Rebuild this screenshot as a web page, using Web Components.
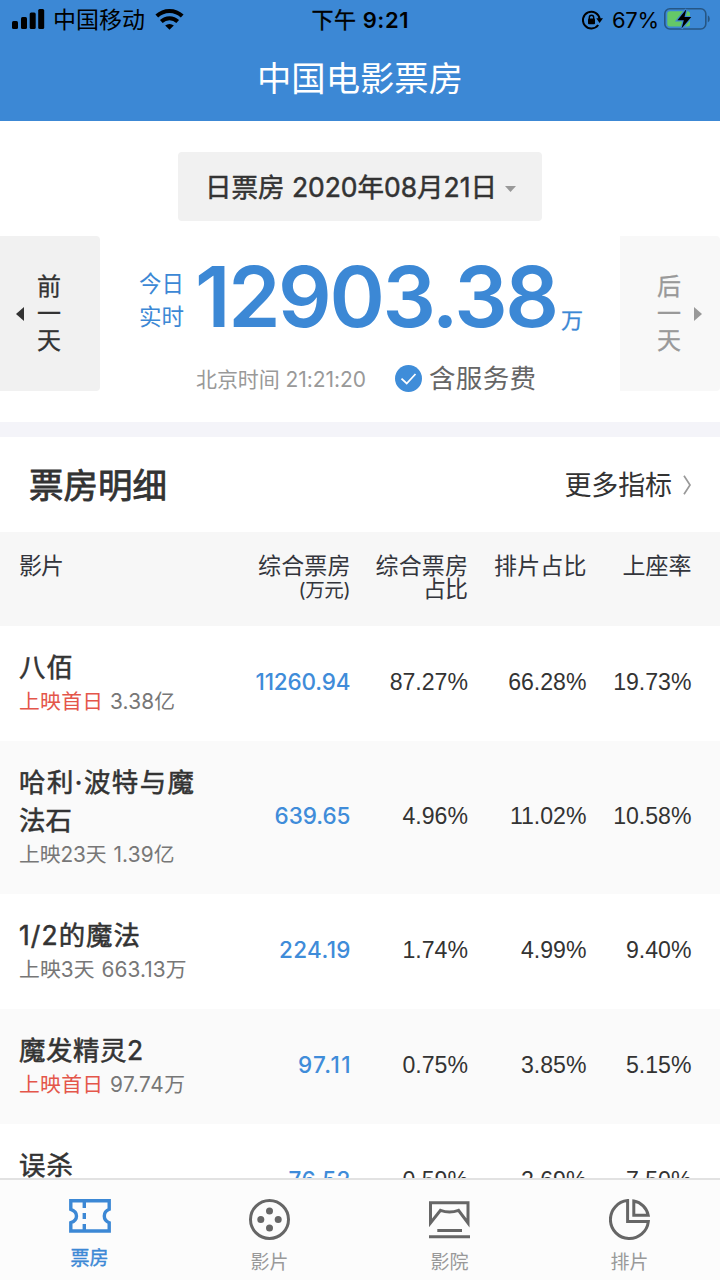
<!DOCTYPE html>
<html lang="zh-CN">
<head>
<meta charset="utf-8">
<title>中国电影票房</title>
<style>
html,body{margin:0;height:100%;overflow:hidden}
body{font-family:Inter,"Noto Sans CJK SC",sans-serif;color:#333;background:#fff}
</style>
</head>
<body>
<box-office-app></box-office-app>
<script>
const define=(name,html,setup)=>customElements.define(name,class extends HTMLElement{
  connectedCallback(){
    if(this.shadowRoot)return;
    const t=document.createElement('template');
    t.innerHTML=typeof html==='function'?html(this):html;
    this.attachShadow({mode:'open'}).append(t.content.cloneNode(true));
    if(setup)setup(this);
  }
});

/* Single line of text tracked to the advance width given in "w". */
define('tracked-text','<style>:host{display:inline-block;white-space:nowrap}</style><slot></slot>',el=>{
  const n=[...el.textContent].length,w=parseFloat(el.getAttribute('w'));
  if(!w)return;
  const s=(w-el.getBoundingClientRect().width)/(n-1);
  el.style.letterSpacing=s+'px';
  el.style.marginRight=-s+'px';
});

define('status-bar',`<style>
:host{display:grid;grid-template-columns:1fr auto 1fr;align-items:center;height:40px;color:#000;font-size:22px;line-height:40px}
.l,.r{display:flex;align-items:center;height:40px}
.l{padding-left:12px}.r{justify-content:flex-end;padding-right:10px}
svg{display:block;flex:none}
.l tracked-text{margin-left:8px;font-size:23px}
.clock{font-weight:600;font-size:22px}
.clock span{font-weight:400;-webkit-text-stroke:.35px}
</style>
<div class="l"><svg width="33" height="40" viewBox="0 0 33 40"><rect y="21" width="6" height="8" rx="1.5"/><rect x="9" y="17" width="6" height="12" rx="1.5"/><rect x="17.7" y="12.5" width="6" height="16.5" rx="1.5"/><rect x="26.2" y="9" width="6" height="20" rx="1.5"/></svg>
<tracked-text w="92">中国移动</tracked-text>
<svg style="margin-left:10px" width="29" height="40" viewBox="0 0 29 40"><path d="M14.5 29.8 L10.2 25.6 A6.3 6.3 0 0 1 18.8 25.6Z"/><g fill="none" stroke="#000" stroke-width="4"><path d="M1.8 16 A18.5 18.5 0 0 1 27.2 16"/><path d="M6.3 21.5 A12 12 0 0 1 22.7 21.5"/></g></svg></div>
<tracked-text class="clock" w="97"><span>下午</span> 9:21</tracked-text>
<div class="r"><svg width="21" height="40" viewBox="0 0 21 40"><path d="M16.2 25 A8.4 8.4 0 1 1 17.7 19" fill="none" stroke="#000" stroke-width="2"/><path d="M14.3 18.2H21L17.6 23Z"/><rect x="6" y="18.5" width="7" height="5.7" rx="1"/><path d="M7.3 19v-1.6a2.2 2.2 0 0 1 4.4 0V19" fill="none" stroke="#000" stroke-width="1.4"/></svg>
<tracked-text style="margin-left:9px" w="47">67%</tracked-text>
<svg style="margin-left:5px" width="46" height="40" viewBox="0 0 46 40"><rect x=".8" y="8.8" width="41" height="20.2" rx="5" fill="none" stroke="#265684" stroke-width="1.6"/><path d="M43.8 15.2q2 1 2 3.7t-2 3.7Z" fill="#265684"/><rect x="3.3" y="11.3" width="22.7" height="15.2" rx="2.5" fill="#65c867"/><path d="M22.3 9.3 13.4 20.2h6.4l-2.3 8.2L27.3 17.1h-6.8Z" stroke="#3d88d5" stroke-width="2.4" paint-order="stroke"/></svg></div>`);

define('title-bar',`<style>:host{display:flex;justify-content:center;height:81px;line-height:77px;font-size:34.3px;color:#fff}</style><tracked-text w="206">中国电影票房</tracked-text>`);

define('date-picker',`<style>
:host{display:flex;align-items:center;box-sizing:border-box;width:364px;height:69px;margin:31px auto 15px;padding-left:27px;border-radius:4px;background:#f1f1f1;font-size:26.5px;line-height:70px;-webkit-text-stroke:.5px #333}
svg{margin:4px 0 0 8px}
</style><tracked-text w="292">日票房 2020年08月21日</tracked-text><svg width="11" height="6" style="-webkit-text-stroke:0"><path d="M0 0H11L5.5 6Z" fill="#999"/></svg>`);

define('day-button',el=>{const next=el.hasAttribute('next');return `<style>
:host{display:flex;align-items:center;justify-content:center;box-sizing:border-box;width:100px;height:155px;background:${next?'#f8f8f8':'#f1f1f1'};color:${next?'#999':'#333'};border-radius:0 4px 4px 0;gap:13px;flex-direction:${next?'row-reverse':'row'};${next?'padding-left:19px':'padding-right:23px'}}
div{display:flex;flex-direction:column;font-size:24px;line-height:27px;-webkit-text-stroke:.3px}
</style><svg width="8" height="14"><path d="${next?'M0 0V14L8 7Z':'M8 0V14L0 7Z'}" fill="currentColor"/></svg><div>${[...el.getAttribute('label')].map(c=>`<span>${c}</span>`).join('')}</div>`});

define('daily-total',`<style>
:host{display:flex;flex-direction:column;flex:1}
.top{display:flex;height:125px;padding-left:39px;color:#3c88d5}
.tag{display:flex;flex-direction:column;width:46px;padding-top:31px;font-size:22.5px;line-height:33px}
.num{margin-left:10px;font-size:84px;font-weight:600;line-height:122px}
.unit{margin-left:2px;font-size:22px;line-height:168px;-webkit-text-stroke:.3px}
.bottom{display:flex;align-items:center;height:36px;padding-left:96px;color:#999;font-size:21px;line-height:36px}
.time{padding-top:2px}
.fee{font-size:26.5px;color:#666;margin-left:7.5px;margin-top:-2px}
svg{margin:-2px 0 0 28.5px;flex:none}
</style>
<div class="top"><div class="tag"><span>今日</span><span>实时</span></div><tracked-text class="num" w="364">12903.38</tracked-text><span class="unit">万</span></div>
<div class="bottom"><tracked-text class="time" w="170">北京时间 21:21:20</tracked-text><svg width="27" height="27"><circle cx="13.5" cy="13.5" r="13.5" fill="#3f8dd9"/><path d="M6.5 13.7 11.7 18.5 20.5 9" fill="none" stroke="#fff" stroke-width="1.8"/></svg><tracked-text class="fee" w="107">含服务费</tracked-text></div>`);

define('summary-panel',`<style>:host{display:flex;height:186px;border-bottom:15px solid #f4f4f9}</style>
<day-button label="前一天"></day-button><daily-total></daily-total><day-button next label="后一天"></day-button>`);

define('section-head',`<style>
:host{display:flex;align-items:center;height:95px;padding:0 28px 0 29px;line-height:95px}
.t{font-size:34.5px;-webkit-text-stroke:.8px #333;flex:none;padding-top:2px}
.m{font-size:27px;margin-left:auto;padding-top:2px}
.m+svg{margin-left:11px}
</style><tracked-text class="t" w="138">票房明细</tracked-text><tracked-text class="m" w="107.5">更多指标</tracked-text><svg width="9" height="20"><path d="M1 .7 7 10 1 19.3" fill="none" stroke="#999" stroke-width="1.7"/></svg>`);

define('table-head',`<style>
:host{display:grid;grid-template-columns:191px 140.5px 117.5px 118.5px 105px;padding:23px 0 0 19px;box-sizing:border-box;height:94px;background:#f7f7f7;font-size:23px;line-height:23px;color:#33353c}
div{display:flex;flex-direction:column;align-items:flex-end}
div:first-of-type{align-items:flex-start}
small{font-size:19.5px;line-height:24px}
</style><div><tracked-text w="45">影片</tracked-text></div><div><tracked-text w="92.5">综合票房</tracked-text><small><tracked-text w="52">(万元)</tracked-text></small></div><div><tracked-text w="92.5">综合票房</tracked-text><tracked-text w="45">占比</tracked-text></div><div><tracked-text w="92.5">排片占比</tracked-text></div><div><tracked-text w="69">上座率</tracked-text></div>`);

define('movie-row',el=>{
  const a=k=>el.getAttribute(k)||'';
  const tt=(v,w)=>`<tracked-text w="${w}">${v}</tracked-text>`;
  const [n1,n2]=a('name').split('|'),[w1,w2]=a('nw').split('|');
  const [gross,...rates]=a('values').split(' ');
  return `<style>
:host{display:grid;grid-template-columns:191px 140.5px 117.5px 118.5px 105px;padding:22px 0 24px 19px;box-sizing:border-box;background:#fff}
:host(:nth-of-type(even)){background:#fafafa}
.movie{display:flex;flex-direction:column}
.name{font-size:26.4px;line-height:38px;height:38px;-webkit-text-stroke:.55px}
.sub{display:flex;gap:7px;height:31px;line-height:32px;font-size:20.8px;color:#777}
.hot{color:#e4564a}
.v{display:flex;align-items:center;justify-content:flex-end;font:23.1px/30px "Liberation Sans",sans-serif;padding-bottom:1px}
.gross{color:#3f8cd9;font:500 22.5px/30px Inter,sans-serif;padding-bottom:2px}
</style><div class="movie"><div class="name">${tt(n1,w1)}</div>${n2?`<div class="name">${tt(n2,w2)}</div>`:''}
<div class="sub"><tracked-text class="${a('days')==='上映首日'?'hot':''}" w="${a('dw')}">${a('days')}</tracked-text>${tt(a('total'),a('tw'))}</div></div>
<div class="v gross">${tt(gross,a('gw'))}</div>${rates.map(v=>`<div class="v"><span>${v}</span></div>`).join('')}`});

define('movie-list',`<style>:host{display:block;height:552px;overflow:hidden}</style>
<movie-row name="八佰" nw="54" days="上映首日" dw="84" total="3.38亿" tw="65" values="11260.94 87.27% 66.28% 19.73%" gw="95"></movie-row>
<movie-row name="哈利·波特与魔|法石" nw="175|53" days="上映23天" dw="87.5" total="1.39亿" tw="61" values="639.65 4.96% 11.02% 10.58%" gw="76"></movie-row>
<movie-row name="1/2的魔法" nw="121" days="上映3天" dw="75.5" total="663.13万" tw="85" values="224.19 1.74% 4.99% 9.40%" gw="71.5"></movie-row>
<movie-row name="魔发精灵2" nw="124" days="上映首日" dw="84" total="97.74万" tw="75" values="97.11 0.75% 3.85% 5.15%" gw="52.5"></movie-row>
<movie-row name="误杀" nw="54" days="上映10天" dw="87" total="11.35亿" tw="68" values="76.52 0.59% 2.69% 7.50%" gw="62"></movie-row>`);

define('tab-item',`<style>
:host{display:flex;flex-direction:column;align-items:center;flex:1;padding-top:19px;color:#999;font-size:19px;line-height:24px}
:host([active]){color:#3c88d5;-webkit-text-stroke:.4px}
::slotted(svg){display:block;margin-right:1px}
span{margin-top:10px;margin-right:1px}
:host([active]) span{margin-top:13.5px}
</style><slot></slot><span><slot name="label"></slot></span>`);

define('tab-bar',`<style>:host{display:flex;height:100px;border-top:2px solid #e2e2e2;background:#fcfcfc}g{fill:none;stroke:#666;stroke-width:3}b{font-weight:400}</style>
<tab-item active><svg width="42" height="34"><g style="stroke:#3c88d5;stroke-width:3.4"><path d="M1.8 1.8H40.2V10.3Q35.3 12.3 35.3 17T40.2 23.7V32H1.8V23.7Q7.5 21.7 7.5 17T1.8 10.3Z"/><path d="M15.3 3V9M15.3 14V20M15.3 25V31"/></g></svg><b slot="label">票房</b></tab-item>
<tab-item><svg width="42" height="42"><g><circle cx="20.5" cy="20.5" r="19"/></g><g style="fill:#666;stroke:none"><circle cx="20.5" cy="12" r="3.5"/><circle cx="11.8" cy="20.5" r="3.5"/><circle cx="29.2" cy="20.5" r="3.5"/><circle cx="20.5" cy="29" r="3.5"/></g></svg><b slot="label">影片</b></tab-item>
<tab-item><svg width="42" height="42"><g><path d="M1.5 24V3.8H39V24L29.5 11.3Q20.5 14.5 11.5 11.3Z"/><path d="M8.3 31.5H33M0 37.7H41"/></g></svg><b slot="label">影院</b></tab-item>
<tab-item><svg width="42" height="42"><g><path d="M18.6 1.6V22.6H39.3A19 19 0 1 1 18.6 1.6Z"/><path d="M24.8 2V16.2H39.2A18 18 0 0 0 24.8 2Z"/></g></svg><b slot="label">排片</b></tab-item>`);

define('box-office-app',`<style>:host{display:flex;flex-direction:column;width:720px;height:1280px;overflow:hidden;background:#fff}header{background:#3c88d5}</style>
<header><status-bar></status-bar><title-bar></title-bar></header>
<date-picker></date-picker><summary-panel></summary-panel><section-head></section-head><table-head></table-head><movie-list></movie-list><tab-bar></tab-bar>`);
</script>
</body>
</html>
